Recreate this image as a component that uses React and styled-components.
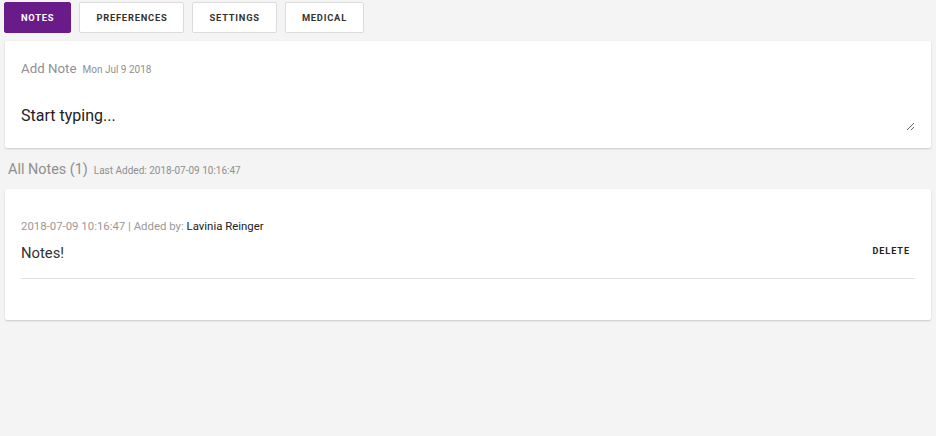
import React from 'react';
import styled, { createGlobalStyle } from 'styled-components';

const Global = createGlobalStyle`
  html, body {
    margin: 0;
    padding: 0;
    background: #f4f4f4;
    font-family: Roboto, "Liberation Sans", sans-serif;
    color: #333;
  }
`;

const Page = styled.div`
  width: 936px;
  height: 436px;
  padding: 2px 5px 0 4px;
  box-sizing: border-box;
`;

const Tabs = styled.div`
  display: flex;
  gap: 8px;
  margin-bottom: 8px;
`;

const Tab = styled.button`
  height: 31px;
  padding: 0 16px;
  border: 1px solid ${p => (p.$active ? '#6a1b8a' : '#dcdcdc')};
  border-radius: 2px;
  background: ${p => (p.$active ? '#6a1b8a' : '#fff')};
  color: ${p => (p.$active ? '#fff' : '#333')};
  font-family: Roboto, "Liberation Sans", sans-serif;
  font-size: 9.3px;
  font-weight: 700;
  letter-spacing: 0.8px;
  cursor: pointer;
`;

const Card = styled.div`
  background: #fff;
  margin-left: 1px;
  border-radius: 2px;
  box-shadow: 0 1px 2px rgba(0, 0, 0, 0.18);
  padding: ${p => p.$pad};
`;

const Heading = styled.div`
  display: flex;
  align-items: baseline;
  gap: 6px;
  color: #8f8f8f;
  font-size: ${p => p.$size}px;
`;

const Small = styled.span`
  font-size: 10px;
  color: #8f8f8f;
`;

const TextArea = styled.textarea`
  display: block;
  width: 100%;
  box-sizing: border-box;
  height: 25px;
  margin-top: 30px;
  border: none;
  outline: none;
  padding: 0;
  font-family: Roboto, "Liberation Sans", sans-serif;
  font-size: 16px;
  color: #333;
  resize: vertical;
  &::placeholder {
    color: #222;
  }
`;

const Section = styled.div`
  padding: 13px 0 11px 4px;
`;

const Meta = styled.div`
  font-size: 11.4px;
  color: #999;
  span {
    color: #222;
  }
`;

const NoteRow = styled.div`
  display: flex;
  justify-content: space-between;
  align-items: center;
  margin-top: 11px;
  padding-bottom: 16px;
  border-bottom: 1px solid #e0e0e0;
`;

const NoteText = styled.div`
  font-size: 14.8px;
  color: #333;
`;

const Delete = styled.button`
  border: none;
  background: none;
  font-family: Roboto, "Liberation Sans", sans-serif;
  font-size: 9px;
  font-weight: 700;
  letter-spacing: 1px;
  color: #222;
  padding: 0 5px 0 0;
  margin-top: -4px;
  cursor: pointer;
`;

export default function App() {
  return (
    <>
      <Global />
      <Page>
        <Tabs>
          <Tab $active>NOTES</Tab>
          <Tab>PREFERENCES</Tab>
          <Tab>SETTINGS</Tab>
          <Tab>MEDICAL</Tab>
        </Tabs>
        <Card $pad="20px 16px 17px 16px">
          <Heading $size={13.3}>
            Add Note <Small>Mon Jul 9 2018</Small>
          </Heading>
          <TextArea placeholder="Start typing..." />
        </Card>
        <Section>
          <Heading $size={14.4}>
            All Notes (1) <Small>Last Added: 2018-07-09 10:16:47</Small>
          </Heading>
        </Section>
        <Card $pad="30px 16px 41px 16px">
          <Meta>
            2018-07-09 10:16:47 | Added by: <span>Lavinia Reinger</span>
          </Meta>
          <NoteRow>
            <NoteText>Notes!</NoteText>
            <Delete>DELETE</Delete>
          </NoteRow>
        </Card>
      </Page>
    </>
  );
}
